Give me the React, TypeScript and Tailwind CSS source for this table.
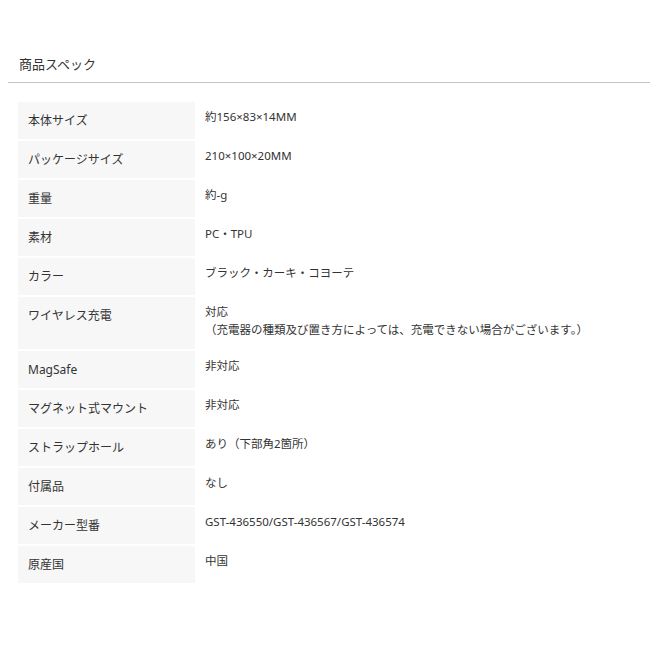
const specs: { label: string; value: string[] }[] = [
  { label: "本体サイズ", value: ["約156×83×14MM"] },
  { label: "パッケージサイズ", value: ["210×100×20MM"] },
  { label: "重量", value: ["約-g"] },
  { label: "素材", value: ["PC・TPU"] },
  { label: "カラー", value: ["ブラック・カーキ・コヨーテ"] },
  {
    label: "ワイヤレス充電",
    value: ["対応", "（充電器の種類及び置き方によっては、充電できない場合がございます。）"],
  },
  { label: "MagSafe", value: ["非対応"] },
  { label: "マグネット式マウント", value: ["非対応"] },
  { label: "ストラップホール", value: ["あり（下部角2箇所）"] },
  { label: "付属品", value: ["なし"] },
  { label: "メーカー型番", value: ["GST-436550/GST-436567/GST-436574"] },
  { label: "原産国", value: ["中国"] },
];

export default function App() {
  return (
    <div
      className="min-h-[650px] bg-white pl-[8px] pt-[54px] text-[#333]"
      style={{ fontFamily: '"Noto Sans", "Noto Sans CJK JP", sans-serif' }}
    >
      <div className="border-b border-[#c4c4c4] pb-[8px] pl-[11px] text-[13px] leading-[20px]">
        商品スペック
      </div>

      <table className="ml-[10px] mt-[17px] border-separate border-spacing-x-0 border-spacing-y-[2px]">
        <tbody>
          {specs.map((row) => (
            <tr key={row.label}>
              <td className="w-[177px] bg-[#f7f7f7] px-[10px] py-[10px] align-top text-[12px] leading-[17px]">
                {row.label}
              </td>
              <td className="px-[10px] pt-[6px] pb-[10px] align-top text-[11.5px] leading-[18px]">
                {row.value.map((line) => (
                  <div key={line}>{line}</div>
                ))}
              </td>
            </tr>
          ))}
        </tbody>
      </table>
    </div>
  );
}
